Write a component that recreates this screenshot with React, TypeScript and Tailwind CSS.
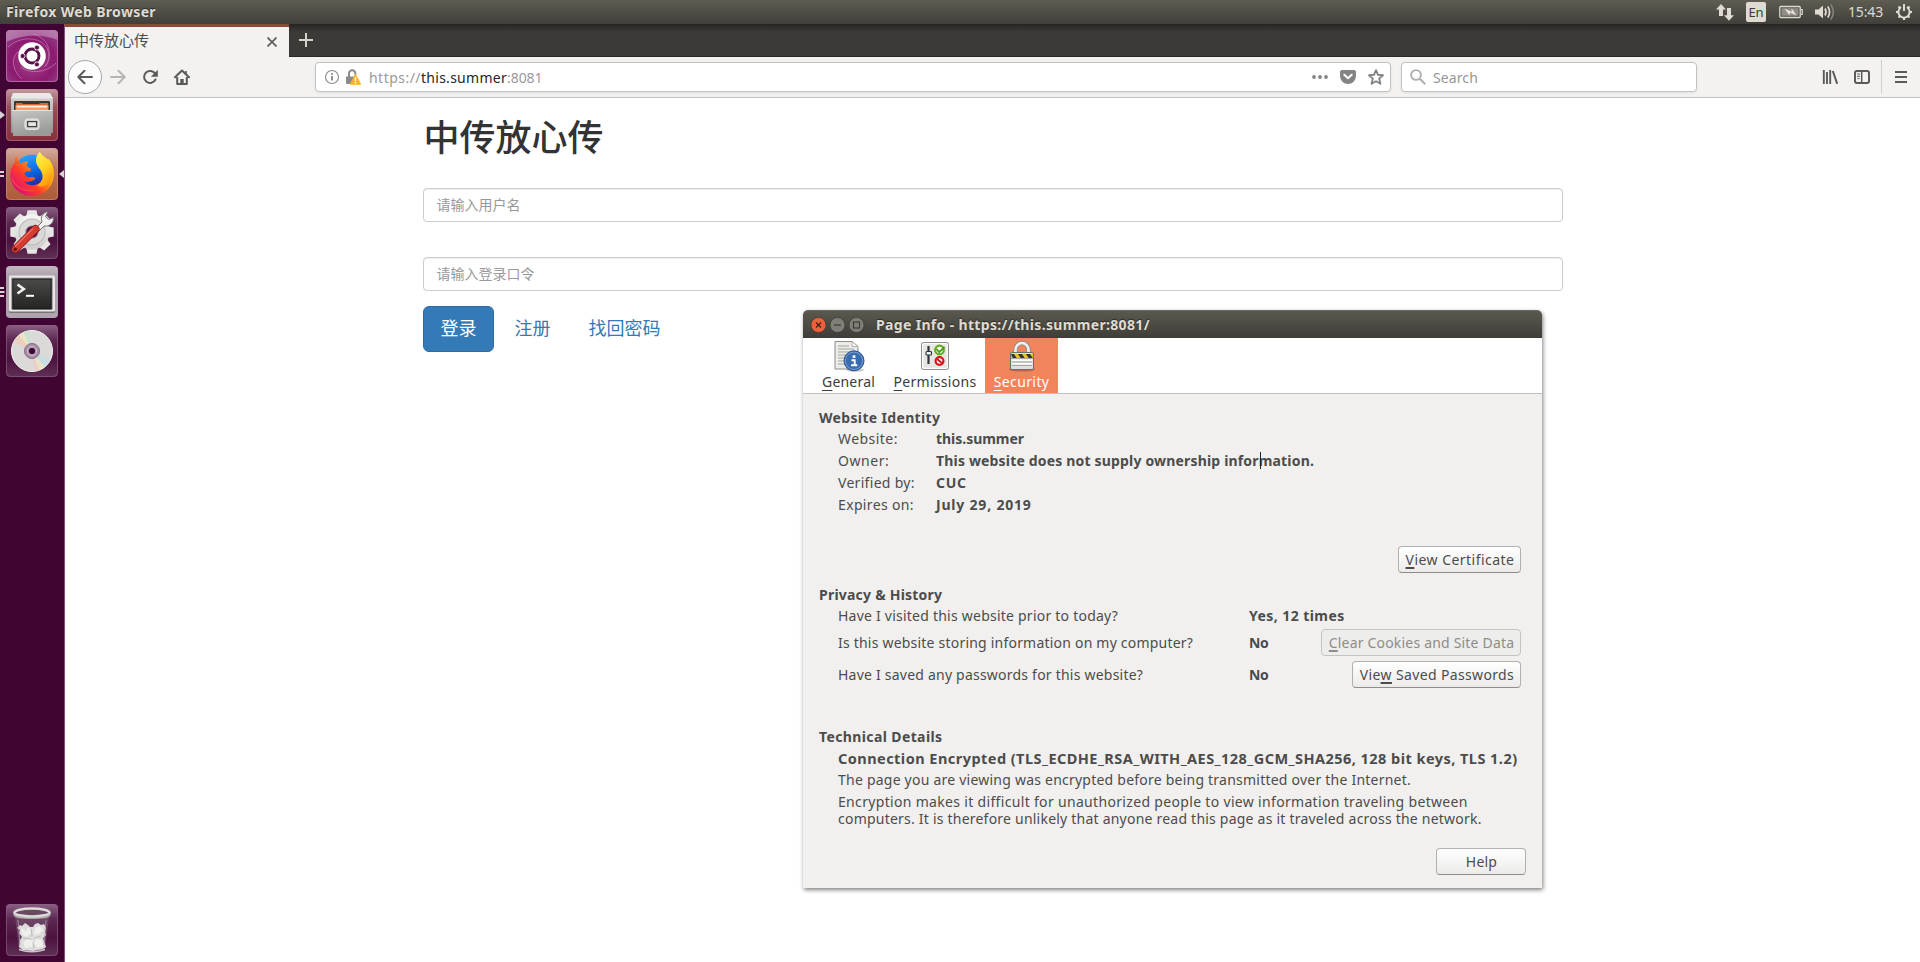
import React, { type ReactNode } from "react";

const UI = "font-['Noto_Sans','Noto_Sans_CJK_SC',sans-serif]";

/* ---------- Launcher icons (52x52) ---------- */

function DashIcon() {
  return (
    <svg viewBox="0 0 52 52" className="size-full">
      <defs>
        <radialGradient id="dash" cx="50%" cy="60%" r="70%">
          <stop offset="0" stopColor="#a8478f" />
          <stop offset="0.6" stopColor="#8c1a70" />
          <stop offset="1" stopColor="#93448a" />
        </radialGradient>
      </defs>
      <rect width="52" height="52" rx="4" fill="url(#dash)" />
      <path d="M0 12 Q26 0 52 10 V4 Q52 0 48 0 H4 Q0 0 0 4Z" fill="#fff" opacity=".3" />
      <g fill="none" stroke="#e3b5da" strokeWidth="1" opacity=".45">
        <path d="M2 17 C14 6 34 6 41 18 C45 26 42 34 38 37" />
        <path d="M27 4 C43 8 47 24 40 36" />
        <path d="M16 49 C6 40 5 28 12 22" />
        <path d="M50 33 C40 43 24 44 15 37" />
      </g>
      <rect x=".5" y=".5" width="51" height="51" rx="4" fill="none" stroke="#c06fb4" opacity=".8" />
      <circle cx="26" cy="26.5" r="14" fill="#50103f" opacity=".35" />
      <circle cx="26" cy="26" r="13.8" fill="#fff" />
      <circle cx="26" cy="26" r="7" fill="none" stroke="#5a1048" strokeWidth="2.9" />
      <g stroke="#fff" strokeWidth="1.4">
        <path d="M14 26h5M32 15.6l-2.6 4.6M32 36.4l-2.6-4.6" />
      </g>
      <g fill="#5a1048" stroke="#fff" strokeWidth=".8">
        <circle cx="16.6" cy="26" r="2.5" />
        <circle cx="30.9" cy="17.6" r="2.5" />
        <circle cx="30.9" cy="34.4" r="2.5" />
      </g>
    </svg>
  );
}

function FilesIcon() {
  return (
    <svg viewBox="0 0 52 52" className="size-full">
      <defs>
        <linearGradient id="fbg" x2="0" y2="1">
          <stop offset="0" stopColor="#c29aa0" />
          <stop offset=".35" stopColor="#96505a" />
          <stop offset="1" stopColor="#862f3a" />
        </linearGradient>
        <linearGradient id="fcab" x2="0" y2="1">
          <stop offset="0" stopColor="#d8d8d6" />
          <stop offset="1" stopColor="#8f8f8d" />
        </linearGradient>
        <linearGradient id="ffront" x2=".3" y2="1">
          <stop offset="0" stopColor="#c6c6c4" />
          <stop offset="1" stopColor="#9a9a98" />
        </linearGradient>
      </defs>
      <rect width="52" height="52" rx="4" fill="url(#fbg)" />
      <rect x=".5" y=".5" width="51" height="51" rx="4" fill="none" stroke="#c68a90" opacity=".5" />
      <path d="M7 4.5h37l3 5V44H5V9.500z" fill="url(#fcab)" />
      <path d="M7 4h37l3 5.500H5z" fill="#e9e9e7" />
      <rect x="8" y="12" width="36" height="10" rx="1" fill="#3b3733" />
      <path d="M10 14h6l1 1h16l1-1h8v8H10z" fill="#d9682c" />
      <path d="M9.500 16h33v6h-33z" fill="#f0a257" />
      <path d="M11 16.800h30v1.700H11z" fill="#fdf0df" />
      <path d="M6 21h40l-1 26H7z" fill="url(#ffront)" />
      <path d="M6 21h40v1H6z" fill="#e4e4e2" />
      <rect x="19" y="30" width="14" height="10.500" rx="2.500" fill="#d6d6d4" stroke="#e9e9e7" />
      <rect x="21.600" y="32.600" width="9" height="5" fill="#e8e8e6" stroke="#43413e" strokeWidth="1.300" />
    </svg>
  );
}

function FirefoxIcon() {
  return (
    <svg viewBox="0 0 52 52" className="size-full">
      <defs>
        <linearGradient id="xbg" x2="0" y2="1">
          <stop offset="0" stopColor="#d3aca0" />
          <stop offset=".4" stopColor="#b8745a" />
          <stop offset="1" stopColor="#ad5a37" />
        </linearGradient>
        <linearGradient id="xb" x1=".3" x2=".6" y2="1">
          <stop offset="0" stopColor="#2aa5ff" />
          <stop offset=".55" stopColor="#0a63e0" />
          <stop offset="1" stopColor="#34148a" />
        </linearGradient>
        <linearGradient id="xf" x1=".9" y1=".1" x2=".1" y2=".8">
          <stop offset="0" stopColor="#ffe226" />
          <stop offset=".35" stopColor="#ff9a0e" />
          <stop offset=".65" stopColor="#ff3d2a" />
          <stop offset="1" stopColor="#e01077" />
        </linearGradient>
        <linearGradient id="xy" x2=".5" y2="1">
          <stop offset="0" stopColor="#fff45a" />
          <stop offset=".6" stopColor="#ffd21e" />
          <stop offset="1" stopColor="#ff980e" />
        </linearGradient>
      </defs>
      <rect width="52" height="52" rx="4" fill="url(#xbg)" />
      <rect x=".5" y=".5" width="51" height="51" rx="4" fill="none" stroke="#d79a80" opacity=".5" />
      <circle cx="26" cy="24" r="17.300" fill="url(#xb)" />
      <path
        d="M10.500 8C9 10 9 12 9.300 14C5.500 18 3.800 23 4.200 28C5 39.500 14.500 48 26 48C38 48 47.500 39 47.800 27C48 20 46 15 42.500 11L36 14C39 20 38.800 30 34.500 34C29 39 21 38 18.500 33C22 35 25 33.500 27.500 32C29.500 31.200 29.500 30 28 29.200C25 28.800 22 30 20 28C17.800 25.800 18.500 23.800 20.500 23.500L24.500 23.300L24.700 20.800L20.500 18L22 13.500C19 13.500 16.500 14 15 15.500C13 15 11 11 10.500 8Z"
        fill="url(#xf)"
      />
      <path
        d="M34 3.500C30.500 7 29.300 11 30.300 15C31.500 19.500 36 22 36.500 27.500C37 32 34.500 35.500 31 37.500C38 41 46.500 35 47.500 26C48.200 19 45.500 14.500 42 11.500C38.500 8.500 35 7 34 3.500Z"
        fill="url(#xy)"
      />
      <path d="M9 18c3-2 7-3 11-2M6 30c3 9 12 14 22 12" stroke="#ff6a1e" strokeWidth="1.500" fill="none" opacity=".5" />
    </svg>
  );
}

function Tile({ id }: { id: string }) {
  return (
    <>
      <defs>
        <linearGradient id={id} x2="0" y2="1">
          <stop offset="0" stopColor="#8a5f83" />
          <stop offset=".3" stopColor="#5c2750" />
          <stop offset=".65" stopColor="#4c1240" />
          <stop offset="1" stopColor="#5f3055" />
        </linearGradient>
      </defs>
      <rect width="52" height="52" rx="4" fill={`url(#${id})`} />
      <rect x=".5" y=".5" width="51" height="51" rx="4" fill="none" stroke="#8c6386" opacity=".6" />
    </>
  );
}

const TEETH = [0, 45, 90, 135, 180, 225, 270, 315];

function SettingsIcon() {
  return (
    <svg viewBox="0 0 52 52" className="size-full">
      <Tile id="t1" />
      <defs>
        <linearGradient id="gr" x2="0" y2="1">
          <stop offset="0" stopColor="#f6f6f5" />
          <stop offset="1" stopColor="#cdcccb" />
        </linearGradient>
      </defs>
      <g fill="#e6e6e5">
        {TEETH.map((a) => (
          <path key={a} d="M20 11L21.500 3.300h9l1.500 7.700z" transform={`rotate(${a} 26 25)`} />
        ))}
      </g>
      <circle cx="26" cy="25" r="17.500" fill="url(#gr)" />
      <circle cx="26" cy="25" r="13.500" fill="#b9b8b7" />
      <circle cx="26" cy="25" r="12.500" fill="#dad9d8" />
      <circle cx="26" cy="25" r="6.300" fill="#531547" stroke="#b3b1b2" />
      <path d="M29 22L36 15C34 10 37 5.500 42 4.500L39.500 9.500L42.500 12.500L47.500 10.500C48 16 43 20 38 19L32 25Z" fill="#f1f1f0" stroke="#77706f" strokeWidth="1" />
      <path d="M9.500 42L29.500 22" stroke="#8f1a15" strokeWidth="8" strokeLinecap="round" />
      <path d="M9.500 42L29.500 22" stroke="#d63a30" strokeWidth="6.500" strokeLinecap="round" />
      <path d="M9.500 39L26.500 22" stroke="#f0837a" strokeWidth="1.300" strokeLinecap="round" opacity=".8" />
      <circle cx="9.300" cy="42.200" r="1.700" fill="#5e1612" />
    </svg>
  );
}

function TerminalIcon() {
  return (
    <svg viewBox="0 0 52 52" className="size-full">
      <defs>
        <linearGradient id="tm" x2="0" y2="1">
          <stop offset="0" stopColor="#c4bac2" />
          <stop offset=".2" stopColor="#aca1aa" />
          <stop offset="1" stopColor="#b0a5ae" />
        </linearGradient>
        <linearGradient id="ts" x2="0" y2="1">
          <stop offset="0" stopColor="#4a4a49" />
          <stop offset="1" stopColor="#242423" />
        </linearGradient>
      </defs>
      <rect width="52" height="52" rx="4" fill="url(#tm)" />
      <rect x="3" y="10" width="46" height="37" rx="1.500" fill="#787474" />
      <rect x="3" y="9.500" width="46" height="36" rx="1.500" fill="#e8e8e7" />
      <rect x="5" y="11.500" width="42" height="32" fill="#a9a8a6" />
      <rect x="6.800" y="13" width="38.400" height="30" fill="url(#ts)" stroke="#161616" strokeWidth="1" />
      <path d="M11.500 18.500l6.300 4.500l-6.300 4.500" fill="none" stroke="#f0f0ef" strokeWidth="2.600" />
      <path d="M20 29.800h8" stroke="#fff" strokeWidth="2" />
    </svg>
  );
}

function DiscIcon() {
  return (
    <svg viewBox="0 0 52 52" className="size-full">
      <Tile id="t2" />
      <circle cx="26" cy="26" r="20.500" fill="#dcdad9" stroke="#f5f4f3" strokeWidth="1" />
      <path d="M26 26L7.500 17A20.500 20.500 0 0 1 13 10Z" fill="#f5c9b0" opacity=".65" />
      <path d="M26 26L13 10A20.500 20.500 0 0 1 18 7.200Z" fill="#f3efb8" opacity=".6" />
      <path d="M26 26L18 7.200A20.500 20.500 0 0 1 23 5.700Z" fill="#b9e8cf" opacity=".6" />
      <path d="M26 26L44.500 35A20.500 20.500 0 0 1 39 42Z" fill="#b9e0e8" opacity=".6" />
      <path d="M26 26L39 42A20.500 20.500 0 0 1 33 45.300Z" fill="#f0ecb8" opacity=".6" />
      <path d="M26 26L33 45.300A20.500 20.500 0 0 1 28 46.500Z" fill="#f3c8c0" opacity=".6" />
      <circle cx="26" cy="26" r="7.600" fill="#a68ca4" stroke="#8d728b" />
      <circle cx="26" cy="26" r="4.600" fill="none" stroke="#cfc3ce" strokeWidth="1" />
      <circle cx="26" cy="26" r="3" fill="#3d0531" />
    </svg>
  );
}

function TrashIcon() {
  return (
    <svg viewBox="0 0 52 52" className="size-full">
      <Tile id="t3" />
      <path d="M9 12L13 46Q26 50 39 46L43 12Z" fill="#8f7a8b" opacity=".35" />
      <path d="M13 45.500Q26 50 39 45.500" fill="none" stroke="#c9c3c8" strokeWidth="1.500" />
      <path
        d="M11 24l3-3 2 1 3-3 3 2 2 2 3 0 2-3 3-1 3 2 3-1 2 4-1 4 1 3-3 3 1 3 2 6-3 2-10 2-10-1-4-3 1-7 2-3-3-4 1-3z"
        fill="#dddcdb"
      />
      <path d="M15 24l5 3 3-4 3 6-6 4-4-3zM29 24l5-2 3 4-4 4-5 1zM17 38l5-3 6 2-2 6-7 1zM30 35l6 1 1 6-6 2-3-4z" fill="#efefee" />
      <path d="M25 25l1 7M17 34l8 1M29 34l6-2M27 38l1 6" stroke="#bfbdbd" strokeWidth="1" fill="none" />
      <path d="M12 16L14 41M40 16L38 41" stroke="#b5a5b1" strokeWidth="1" opacity=".7" />
      <path d="M7.500 8V11.500Q9 15 26 15T44.500 11.500V8Z" fill="#a9a6a5" />
      <ellipse cx="26" cy="8.500" rx="17.500" ry="4" fill="#6a4a62" stroke="#dddbd9" strokeWidth="2.500" />
    </svg>
  );
}

/* ---------- Launcher ---------- */

function LauncherItem({ children, pips = 0, focused }: { children: ReactNode; pips?: number; focused?: boolean }) {
  return (
    <div className="relative flex h-[59px] justify-center pt-1.5">
      <div className="size-[52px]">{children}</div>
      {pips > 0 && (
        <svg viewBox="0 0 6 14" className="absolute top-[25px] left-0 h-3.5 w-1.5" fill="#d9d2d7">
          {pips === 1 && <path d="M0 3l5 4l-5 4z" />}
          {pips === 2 && <path d="M0 4h4v2H0zM0 8h4v2H0z" />}
          {pips === 3 && <path d="M0 2h4v2H0zM0 6h4.500v2H0zM0 10h4v2H0z" />}
        </svg>
      )}
      {focused && (
        <svg viewBox="0 0 5 8" className="absolute top-7 right-0 h-2 w-[5px]" fill="#d9d2d7">
          <path d="M5 0L0 4L5 8z" />
        </svg>
      )}
    </div>
  );
}

function Launcher() {
  return (
    <aside className="flex w-[65px] shrink-0 flex-col border-r border-[#82527a] bg-[#400532]">
      <LauncherItem><DashIcon /></LauncherItem>
      <LauncherItem pips={1}><FilesIcon /></LauncherItem>
      <LauncherItem pips={2} focused><FirefoxIcon /></LauncherItem>
      <LauncherItem><SettingsIcon /></LauncherItem>
      <LauncherItem pips={3}><TerminalIcon /></LauncherItem>
      <LauncherItem><DiscIcon /></LauncherItem>
      <div className="mt-auto mb-[5px]"><LauncherItem><TrashIcon /></LauncherItem></div>
    </aside>
  );
}

/* ---------- Top panel ---------- */

function TopPanel() {
  return (
    <header className="flex h-6 shrink-0 items-center bg-linear-to-b from-[#5f5d51] to-[#403f3a] pl-1.5 text-sm leading-6 text-[#dfdbd2]">
      <span className="font-bold tracking-[0.35px] [text-shadow:0_-1px_1px_#2b2a26]">Firefox Web Browser</span>
      <div className="ml-auto flex h-full items-center">
        <svg viewBox="0 0 18 18" className="mr-3 h-[18px] w-[18px]" fill="#dfdbd2">
          <path d="M5 1L0 6.500H3V13H7V6.500H10z" />
          <path d="M13 17.800L8 12.300H11V5H15V12.300H18z" />
        </svg>
        <span className="mr-[13px] flex h-5 w-5 items-center justify-center rounded-[2px] bg-[#dfdbd2] text-[13px] tracking-[-0.3px] text-[#3c3b37]">
          En
        </span>
        <svg viewBox="0 0 24 14" className="mr-3 h-3.5 w-6">
          <rect x=".8" y="1.500" width="20.400" height="11" rx="1" fill="none" stroke="#dfdbd2" strokeWidth="1.300" />
          <rect x="2.500" y="3.200" width="17" height="7.600" fill="#8f8d86" />
          <path d="M22 4.500h1.200v5H22" fill="none" stroke="#dfdbd2" strokeWidth="1.200" />
          <path d="M5.500 3.500l7 3.200.3-3.200 4.700 7-6.500-3-.5 3z" fill="#e8e4db" />
        </svg>
        <svg viewBox="0 0 20 18" className="mr-[13px] h-[18px] w-5" fill="none" stroke="#dfdbd2" strokeWidth="1.700">
          <path d="M0 6.500h3.500L8 2.500v13L3.500 11.500H0z" fill="#dfdbd2" stroke="none" />
          <path d="M10 5.500q2 3.500 0 7" />
          <path d="M12.800 3.500q3.500 5.500 0 11" />
          <path d="M15.800 1.500q5 7.500 0 15" stroke="#83817a" />
        </svg>
        <span className="mr-3 tracking-[-0.15px]">15:43</span>
        <svg viewBox="0 0 18 18" className="mr-[7px] size-[18px]" fill="none" stroke="#dfdbd2">
          <path d="M6.200 4.200a5.600 5.600 0 1 0 5.600 0" strokeWidth="2" />
          <path d="M9 1v7" strokeWidth="2" />
          <path d="M3.500 3.500l1.700 1.700M14.500 3.500l-1.700 1.700M1 9h2.500M17 9h-2.500M3.500 14.600l1.700-1.700M14.500 14.600l-1.700-1.700M9 17v-2.500" strokeWidth="2" />
        </svg>
      </div>
    </header>
  );
}

/* ---------- Browser chrome ---------- */

function TabStrip() {
  return (
    <div className="flex h-[33px] shrink-0 border-b border-[#2a2926] bg-linear-to-b from-[#262522] via-[#3b3a36] via-25% to-[#3b3a36]">
      <div className="-mb-px flex w-56 items-center border-t-[3px] border-[#8c4a34] bg-[#f3f2f1] pr-3 pl-[9px]">
        <span className="pb-[3px] text-[15px] leading-none text-[#4c4c4c]">中传放心传</span>
        <svg viewBox="0 0 10 10" className="mb-px ml-auto size-2.5" stroke="#5f5d5c" strokeWidth="1.700">
          <path d="M.5 .5l9 9M9.500 .5l-9 9" />
        </svg>
      </div>
      <svg viewBox="0 0 14 14" className="mt-[9px] ml-2.5 size-3.5" stroke="#d5d3ce" strokeWidth="2">
        <path d="M7 0v14M0 7h14" />
      </svg>
    </div>
  );
}

function NavBar() {
  return (
    <div className="flex h-[41px] shrink-0 items-center border-b border-[#c3c1bf] bg-[#f3f2f1]">
      <div className="ml-[3px] flex size-[34px] items-center justify-center rounded-full border border-[#a9a8a7] bg-[#fcfcfc]">
        <svg viewBox="0 0 16 16" className="size-4" fill="none" stroke="#5a5a59" strokeWidth="2" strokeLinecap="round" strokeLinejoin="round">
          <path d="M15 8H1.500M7.500 1.800L1.300 8l6.200 6.200" />
        </svg>
      </div>
      <svg viewBox="0 0 16 16" className="ml-2 size-4" fill="none" stroke="#b6b5b4" strokeWidth="2" strokeLinecap="round" strokeLinejoin="round">
        <path d="M1 8h13.500M8.500 1.800L14.700 8l-6.200 6.200" />
      </svg>
      <svg viewBox="0 0 16 16" className="ml-4 size-4" fill="none" stroke="#5a5a59" strokeWidth="2">
        <path d="M13.200 4.800A6 6 0 1 0 13.500 10.500" strokeLinecap="round" />
        <path d="M15.800 .8v7H8.800z" fill="#5a5a59" stroke="none" />
      </svg>
      <svg viewBox="0 0 16 16" className="mr-[125px] ml-4 size-4" fill="none" stroke="#5a5a59">
        <path d="M1 8.300L8 1.500l7 6.800" strokeWidth="2" strokeLinecap="round" strokeLinejoin="round" />
        <path d="M3.200 8v7h9.600V8" strokeWidth="2" strokeLinejoin="round" />
        <path d="M12 2v3" strokeWidth="1.600" />
        <path d="M6.300 15v-5h3.400v5z" fill="#5a5a59" stroke="none" />
      </svg>

      <div className="flex h-[30px] w-[1076px] items-center rounded border border-[#c4c2c1] bg-white pl-2 shadow-[0_1px_3px_rgba(0,0,0,0.08)]">
        <svg viewBox="0 0 16 16" className="size-4" fill="none" stroke="#8a8a89">
          <circle cx="8" cy="8" r="6.500" strokeWidth="1.100" />
          <path d="M8 7v4.500M8 4v1.800" strokeWidth="1.900" />
        </svg>
        <svg viewBox="0 0 16 16" className="ml-[5px] size-4">
          <path d="M4 8V4.500a3.200 3.200 0 0 1 6.400 0V6" fill="none" stroke="#8a8a89" strokeWidth="2" />
          <path d="M1 7.500h8.500L5.500 15H2q-1 0-1-1z" fill="#8a8a89" />
          <path d="M10.500 5.500l5.200 9.700H5.300z" fill="#ffb31a" stroke="#ffb31a" strokeLinejoin="round" />
          <path d="M10.500 8.500v3.500M10.500 13v1.500" stroke="#fff" strokeWidth="1.500" />
        </svg>
        <div className="mt-px ml-2 text-sm leading-7 whitespace-nowrap text-[#9b9a99]">
          <span className="tracking-[0.47px]">https://</span>
          <span className="tracking-[0.27px] text-[#262626]">this.summer</span>
          <span className="tracking-[-0.05px]">:8081</span>
        </div>
        <div className="ml-auto flex items-center pr-1.5 text-[#858483]">
          <svg viewBox="0 0 16 4" className="h-1 w-4" fill="currentColor">
            <circle cx="2" cy="2" r="1.900" /><circle cx="8" cy="2" r="1.900" /><circle cx="14" cy="2" r="1.900" />
          </svg>
          <svg viewBox="0 0 16 14" className="ml-3 h-3.5 w-4">
            <path d="M2 0h12q2 0 2 2v4a8 8 0 0 1-16 0V2q0-2 2-2z" fill="currentColor" />
            <path d="M4.300 4.800L8 8.300l3.700-3.500" fill="none" stroke="#fff" strokeWidth="2" strokeLinecap="round" strokeLinejoin="round" />
          </svg>
          <svg viewBox="0 0 16 16" className="ml-3 size-4" fill="none" stroke="currentColor" strokeWidth="1.900" strokeLinejoin="round">
            <path d="M8 1.200l2 4.600 5 .5-3.800 3.300 1.200 5.200L8 12.200l-4.400 2.600 1.200-5.200L1 6.300 6 5.800z" />
          </svg>
        </div>
      </div>

      <div className="ml-2.5 flex h-[30px] w-[296px] items-center rounded border border-[#c4c2c1] bg-white pl-2 shadow-[0_1px_3px_rgba(0,0,0,0.08)]">
        <svg viewBox="0 0 16 16" className="size-4" fill="none" stroke="#b1b0af" strokeWidth="1.900">
          <circle cx="6" cy="6" r="4.900" />
          <path d="M9.600 9.600L15.300 15.300" strokeWidth="2.100" />
        </svg>
        <span className="mt-px ml-[7px] text-sm leading-7 tracking-[0.1px] text-[#979695]">Search</span>
      </div>

      <div className="ml-auto flex items-center text-[#5a5a59]">
        <svg viewBox="0 0 16 14" className="h-3.5 w-4" fill="none" stroke="currentColor" strokeWidth="1.900">
          <path d="M1.800 0v14M5 2v12M8.200 0v14" /><path d="M10.800 1l4.400 12.800" strokeWidth="2" />
        </svg>
        <svg viewBox="0 0 16 14" className="ml-4 h-3.5 w-4" fill="none" stroke="currentColor">
          <rect x="1" y="1" width="14" height="12" rx="2" strokeWidth="2" />
          <path d="M7.700 1v12" strokeWidth="1.500" />
          <path d="M3 4h3M3 6.300h3M3.500 8.600H5.500" strokeWidth="1" />
        </svg>
        <div className="mr-[13px] ml-[11px] h-[34px] w-px bg-[#d0cfce]" />
        <svg viewBox="0 0 12 12" className="mr-[13px] h-3 w-3" stroke="currentColor" strokeWidth="2">
          <path d="M0 1h12M0 6h12M0 11h12" />
        </svg>
      </div>
    </div>
  );
}

/* ---------- Login page ---------- */

function Field({ hint, className }: { hint: string; className: string }) {
  return (
    <div
      className={`flex h-[34px] items-center rounded border border-[#ccc] px-[13px] pb-[3px] text-sm text-[#999] shadow-[inset_0_1px_1px_rgba(0,0,0,0.075)] ${className}`}
    >
      {hint}
    </div>
  );
}

function LoginPage() {
  return (
    <main className="flex w-[1140px] flex-col self-center pt-[17px] font-['Noto_Sans_CJK_SC',sans-serif]">
      <h1 className="pl-px text-4xl leading-10 font-medium text-[#333]">中传放心传</h1>
      <Field hint="请输入用户名" className="mt-[33px]" />
      <Field hint="请输入登录口令" className="mt-[35px]" />
      <div className="mt-[15px] flex h-[46px] text-lg leading-[41px] text-[#337ab7]">
        <button className="rounded-md border border-[#2e6da4] bg-[#337ab7] px-4 pb-[3px] pl-[17px] text-white">登录</button>
        <a className="ml-1 border border-transparent px-4">注册</a>
        <a className="ml-1 border border-transparent px-4">找回密码</a>
      </div>
    </main>
  );
}

/* ---------- Page Info dialog ---------- */

function GtkButton({ children, disabled, className = "" }: { children: ReactNode; disabled?: boolean; className?: string }) {
  return (
    <button
      disabled={disabled}
      className={`flex h-[27px] items-center justify-center rounded border pl-px text-sm whitespace-nowrap ${
        disabled
          ? "border-[#c6c4c2] bg-[#ededec] text-[#8f8c88]"
          : "border-[#b3b1ae] border-b-[#8f8d8a] bg-linear-to-b from-white to-[#ecebea] text-[#4c4c4c]"
      } ${className}`}
    >
      <span>{children}</span>
    </button>
  );
}

function Key({ children }: { children: string }) {
  return <span className="underline decoration-2 underline-offset-2 [text-decoration-skip-ink:none]">{children}</span>;
}

function DialogTitle() {
  return (
    <div className="flex h-7 shrink-0 items-center rounded-t-[5px] border-t border-[#6b695f] bg-linear-to-b from-[#5b594e] to-[#3e3d38] pl-2">
      <svg viewBox="0 0 54 16" className="h-4 w-[54px]">
        <circle cx="7.500" cy="8" r="7.500" fill="#ee613a" stroke="#33322e" strokeWidth=".6" />
        <path d="M5 5.500l5 5M10 5.500l-5 5" stroke="#40201a" strokeWidth="1.200" />
        <circle cx="26.500" cy="8" r="7.500" fill="#7f7e77" stroke="#33322e" strokeWidth=".6" />
        <path d="M23 8h7" stroke="#393834" strokeWidth="1.200" />
        <circle cx="45.500" cy="8" r="7.500" fill="#7f7e77" stroke="#33322e" strokeWidth=".6" />
        <rect x="42.500" y="5" width="6" height="6" fill="none" stroke="#393834" strokeWidth="1.100" />
      </svg>
      <span className="ml-[11px] text-sm leading-7 font-bold tracking-[0.34px] text-[#dfdbd2] [text-shadow:0_-1px_1px_#2b2a26]">
        Page Info - https://this.summer:8081/
      </span>
    </div>
  );
}

function GeneralIcon() {
  return (
    <svg viewBox="0 0 32 32" className="size-8">
      <path d="M2 1.500h17l6 5V29H2z" fill="#ecece9" stroke="#8d8f8a" />
      <path d="M19 1.500v5h6z" fill="#fafaf9" stroke="#a3a5a0" strokeWidth=".8" />
      <path d="M5 6h11M5 9h16M5 12h16M5 15h14M5 18h8M5 21h7M5 24h7" stroke="#babdb6" strokeWidth="1.300" />
      <ellipse cx="22" cy="30" rx="9" ry="1.800" fill="#000" opacity=".2" />
      <circle cx="21" cy="20.800" r="10" fill="#3a6db0" stroke="#2a5592" />
      <circle cx="21" cy="20.800" r="8.700" fill="none" stroke="#7fa3d3" strokeWidth=".9" />
      <path d="M21 15.300v2.600" stroke="#fff" strokeWidth="2.800" />
      <path d="M18.500 20.200h3.200v5.300M18 25.300h6.300" stroke="#fff" strokeWidth="1.900" fill="none" />
    </svg>
  );
}

function PermissionsIcon() {
  return (
    <svg viewBox="0 0 32 32" className="size-8">
      <rect x="2.500" y="2.500" width="27" height="27" rx="2" fill="#e6e6e4" stroke="#8e908b" />
      <rect x="3.700" y="3.700" width="24.600" height="24.600" rx="1.200" fill="none" stroke="#fff" />
      <path d="M9.500 6v18" stroke="#2e3436" strokeWidth="2.200" />
      <rect x="7" y="11.500" width="5.500" height="3.500" rx="1" fill="#f2f2f1" stroke="#2e3436" strokeWidth="1.100" />
      <circle cx="20.500" cy="10" r="4.300" fill="#fff" stroke="#5db21c" strokeWidth="2.200" />
      <path d="M17.500 9l2.700 3.200L25.500 7" stroke="#4e9a1b" strokeWidth="1.800" fill="none" />
      <circle cx="20.500" cy="21" r="3.900" fill="#fff" stroke="#d5171c" strokeWidth="2.200" />
      <path d="M17.800 18.700l5.400 4.600" stroke="#d5171c" strokeWidth="1.900" />
    </svg>
  );
}

function SecurityIcon() {
  return (
    <svg viewBox="0 0 32 32" className="size-8">
      <ellipse cx="16" cy="29.500" rx="13" ry="2" fill="#000" opacity=".22" />
      <path d="M9.500 14V10a6.500 7 0 0 1 13 0v4" fill="none" stroke="#8b8d88" strokeWidth="4.400" />
      <path d="M9.500 14V10a6.500 7 0 0 1 13 0v4" fill="none" stroke="#f1f1ef" strokeWidth="2.600" />
      <rect x="4.500" y="12.500" width="23" height="17" rx="1.500" fill="#dfe0dd" stroke="#6c6e69" />
      <path d="M5 14h22v4.500H5z" fill="#e3c51e" />
      <path d="M5 14h3l3 4.500H7zM12 14h4l3 4.500h-4zM20 14h4l3 4.500h-4z" fill="#35352f" />
      <path d="M5 18.500h22M6 22h20M6 25.500h20" stroke="#a5a7a2" strokeWidth="1" />
      <path d="M6 20.200h20M6 23.800h20" stroke="#fbfbfa" strokeWidth="1.400" />
    </svg>
  );
}

function DialogTab({ icon, k, rest, className }: { icon: ReactNode; k: string; rest: string; className: string }) {
  return (
    <div className={`flex flex-col items-center text-sm ${className}`}>
      <div className="mt-[2px] h-8">{icon}</div>
      <span className="leading-[19px]">
        <span className="underline decoration-1 underline-offset-[3px]">{k}</span>
        {rest}
      </span>
    </div>
  );
}

const IDENTITY = [
  { label: "Website:", lc: "tracking-[0.45px]", value: "this.summer", vc: "tracking-[-0.03px]" },
  { label: "Owner:", lc: "tracking-[0.55px]", value: "This website does not supply ownership information.", vc: "tracking-[0.175px]" },
  { label: "Verified by:", lc: "tracking-[0.3px]", value: "CUC", vc: "tracking-[0.7px]" },
  { label: "Expires on:", lc: "tracking-[0.35px]", value: "July 29, 2019", vc: "tracking-[0.8px]" },
];

function PageInfoDialog() {
  return (
    <section className="absolute top-[310px] left-[803px] flex h-[578px] w-[739px] flex-col rounded-t-[5px] bg-[#f1f0ee] text-sm text-[#4c4c4c] shadow-[1px_2px_4px_0px_rgba(0,0,0,0.5)]">
      <DialogTitle />
      <nav className="flex h-14 shrink-0 border-b border-[#c3c1bf] bg-white text-[#3c3c3c]">
        <DialogTab icon={<GeneralIcon />} k="G" rest="eneral" className="ml-[9px] w-[73px] tracking-[0.2px]" />
        <DialogTab icon={<PermissionsIcon />} k="P" rest="ermissions" className="w-[100px] tracking-[0.3px]" />
        <DialogTab icon={<SecurityIcon />} k="S" rest="ecurity" className="w-[73px] bg-[#f1845a] tracking-[0.4px] text-white" />
      </nav>

      <div className="flex grow flex-col pt-[13px] pr-[21px] pl-4 leading-[22px] whitespace-nowrap">
        <h2 className="h-[21px] font-bold tracking-[0.34px]">Website Identity</h2>
        {IDENTITY.map((r) => (
          <div key={r.label} className="flex h-[22px] pl-[19px]">
            <span className={`w-[98px] ${r.lc}`}>{r.label}</span>
            <span className={`relative font-bold ${r.vc}`}>
              {r.value}
              {r.label === "Owner:" && <span className="absolute top-[2px] left-[324px] h-[17px] w-px bg-[#222]" />}
            </span>
          </div>
        ))}
        <GtkButton className="mt-[30px] w-[123px] self-end tracking-[0.47px]"><Key>V</Key>iew Certificate</GtkButton>

        <h2 className="mt-[11px] h-[21px] font-bold tracking-[0.22px]">Privacy &amp; History</h2>
        <div className="flex h-6 pl-[19px]">
          <span className="w-[411px] tracking-[0.23px]">Have I visited this website prior to today?</span>
          <span className="font-bold tracking-[0.43px]">Yes, 12 times</span>
        </div>
        <div className="flex h-[27px] items-center pl-[19px]">
          <span className="w-[411px] tracking-[0.21px]">Is this website storing information on my computer?</span>
          <span className="font-bold tracking-[-0.3px]">No</span>
          <GtkButton disabled className="ml-auto w-[200px] tracking-[0.19px]"><Key>C</Key>lear Cookies and Site Data</GtkButton>
        </div>
        <div className="mt-[5px] flex h-[27px] items-center pl-[19px]">
          <span className="w-[411px] tracking-[0.22px]">Have I saved any passwords for this website?</span>
          <span className="font-bold tracking-[-0.3px]">No</span>
          <GtkButton className="ml-auto w-[169px] tracking-[0.36px]">Vie<Key>w</Key> Saved Passwords</GtkButton>
        </div>

        <h2 className="mt-[38px] h-[21px] font-bold tracking-[0.38px]">Technical Details</h2>
        <div className="pl-[19px]">
          <p className="text-[14.5px] leading-[22px] font-bold tracking-[0.46px]">
            Connection Encrypted (TLS_ECDHE_RSA_WITH_AES_128_GCM_SHA256, 128 bit keys, TLS 1.2)
          </p>
          <p className="tracking-[0.227px]">The page you are viewing was encrypted before being transmitted over the Internet.</p>
          <p className="mt-[2px] leading-[17px] tracking-[0.325px]">
            Encryption makes it difficult for unauthorized people to view information traveling between
          </p>
          <p className="leading-[17px] tracking-[0.22px]">
            computers. It is therefore unlikely that anyone read this page as it traveled across the network.
          </p>
        </div>
        <GtkButton className="mt-auto -mr-[5px] mb-[13px] w-[90px] self-end tracking-[0.2px]">Help</GtkButton>
      </div>
    </section>
  );
}

export default function App() {
  return (
    <div className={`relative flex h-[962px] w-[1920px] flex-col overflow-hidden bg-white ${UI}`}>
      <TopPanel />
      <div className="flex min-h-0 grow">
        <Launcher />
        <div className="flex min-w-0 grow flex-col">
          <TabStrip />
          <NavBar />
          <LoginPage />
        </div>
      </div>
      <PageInfoDialog />
    </div>
  );
}
